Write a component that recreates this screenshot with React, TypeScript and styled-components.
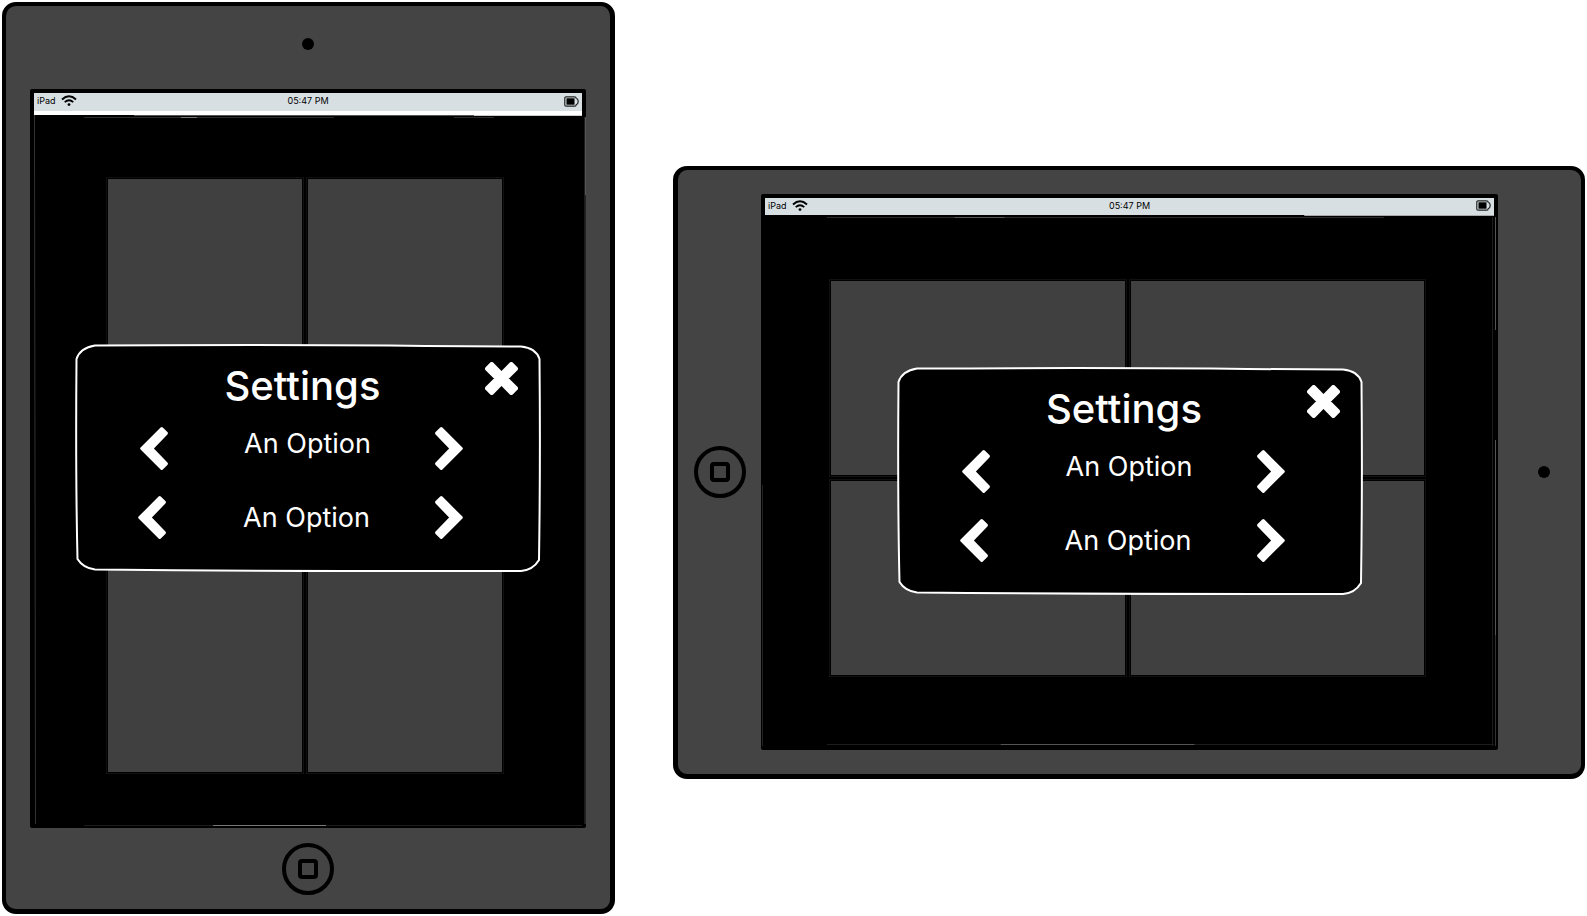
import React from "react";
import styled, { createGlobalStyle } from "styled-components";

type Orientation = "portrait" | "landscape";

const GlobalStyle = createGlobalStyle`
  *, *::before, *::after { box-sizing: border-box; }
  body {
    margin: 0;
    background: #fff;
    font-family: Inter, "Liberation Sans", sans-serif;
  }
  button { padding: 0; border: 0; background: none; color: inherit; cursor: pointer; }
  svg { display: block; }
`;

const Page = styled.main`
  display: grid;
  grid-template-columns: minmax(0, 613fr) minmax(0, 912fr);
  align-items: start;
  gap: 58px;
  padding: 2px;
`;

const Device = styled.section<{ $orientation: Orientation }>`
  display: flex;
  background: #444;
  border: solid #000;
  border-radius: 14px;
  ${({ $orientation }) =>
    $orientation === "portrait"
      ? `
        flex-direction: column;
        aspect-ratio: 613 / 912;
        padding: 0 24px;
        border-width: 4px 5px 5px 4px;
      `
      : `
        flex-direction: row-reverse;
        aspect-ratio: 912 / 613;
        margin-top: 164px;
        padding: 24px 0;
        border-width: 4px 4px 5px 5px;
      `}
`;

const Bezel = styled.div<{ $narrow?: boolean }>`
  flex: 0 0 ${({ $narrow }) => ($narrow ? "81px" : "83px")};
  display: flex;
  align-items: center;
  justify-content: center;
`;

const Camera = styled.span<{ $orientation: Orientation }>`
  width: 12px;
  height: 12px;
  border-radius: 50%;
  background: #000;
  margin: ${({ $orientation }) => ($orientation === "portrait" ? "0 0 8px" : "0 0 0 8px")};
`;

const HomeButton = styled.button`
  display: grid;
  place-items: center;
  width: 52px;
  height: 52px;
  && { border: 4px solid #000; }
  border-radius: 50%;

  &::before {
    content: "";
    width: 20px;
    height: 20px;
    border: 4px solid #000;
    border-radius: 4px;
  }
`;

const Screen = styled.div`
  flex: 1;
  min-width: 0;
  min-height: 0;
  display: flex;
  flex-direction: column;
  border: 4px solid #000;
  border-radius: 2px;
  background: #000;
`;

const StatusBar = styled.header<{ $orientation: Orientation }>`
  display: grid;
  grid-template-columns: 1fr auto 1fr;
  align-items: center;
  height: ${({ $orientation }) => ($orientation === "portrait" ? "22px" : "17px")};
  border-bottom: ${({ $orientation }) => ($orientation === "portrait" ? "4px solid #fff" : "0")};
  padding: 0 3px 2px;
  background: #d7dfe2;
  color: #000;
  font-size: 9px;
  line-height: 12px;
`;

const Carrier = styled.span`
  display: flex;
  align-items: center;
  gap: 5px;
`;

const BatterySlot = styled.span`
  justify-self: end;
`;

const Content = styled.div<{ $orientation: Orientation }>`
  position: relative;
  flex: 1;
  display: flex;
  padding: ${({ $orientation }) =>
    $orientation === "portrait" ? "64px 80px 52px 74px" : "66px 70px 71px 66px"};
`;

const Tiles = styled.div`
  flex: 1;
  display: grid;
  grid-template-columns: 1fr 1fr;
  grid-template-rows: 1fr 1fr;
  gap: 6px;
`;

const Tile = styled.div`
  background: #404040;
  outline: 1px solid #101010;
  outline-offset: 1px;
`;

const SketchLines = styled.svg`
  position: absolute;
  inset: 0;
  width: 100%;
  height: 100%;
  overflow: visible;
  pointer-events: none;
`;

const Dialog = styled.section<{ $orientation: Orientation }>`
  position: absolute;
  top: ${({ $orientation }) => ($orientation === "portrait" ? "229px" : "152px")};
  left: 50%;
  transform: translateX(-50%);
  width: 466px;
  height: 228px;
  padding: 18px 78px 0 63px;
  color: #fff;
`;

const DialogOutline = styled.svg`
  position: absolute;
  inset: 0;
`;

const DialogBody = styled.div`
  position: relative;
  display: flex;
  flex-direction: column;
`;

const Title = styled.h2`
  margin: 0 0 17px;
  padding-left: 4px;
  font-size: 40px;
  line-height: 48px;
  font-weight: 500;
  text-align: center;
`;

const OptionList = styled.div`
  display: flex;
  flex-direction: column;
  gap: 26px;
`;

const OptionRow = styled.div<{ $raised?: boolean }>`
  display: grid;
  grid-template-columns: 28px 1fr 28px;
  align-items: ${({ $raised }) => ($raised ? "start" : "center")};
  padding-left: ${({ $raised }) => ($raised ? "2px" : "0")};
  height: 43px;
`;

const OptionLabel = styled.span`
  padding-left: 12px;
  font-size: 27px;
  line-height: 34px;
  text-align: center;
  white-space: nowrap;
`;

const CloseButton = styled.button`
  position: absolute;
  top: 18px;
  right: 23px;
`;

const WifiIcon = () => (
  <svg width="16" height="12" viewBox="0 0 16 12" fill="none" stroke="#000" aria-hidden="true">
    <path d="M1 4.4Q8-1.8 15 4.4" strokeWidth="2" />
    <path d="M3.7 7.1Q8 3.4 12.3 7.1" strokeWidth="1.8" />
    <circle cx="8" cy="9.6" r="1.4" fill="#000" stroke="none" />
  </svg>
);

const BatteryIcon = () => (
  <svg width="15" height="11" viewBox="0 0 15 11" aria-hidden="true">
    <path
      d="M2 .8H10.5Q12 .8 12.2 2.2Q14.2 2.8 14.2 5.5Q14.2 8.2 12.2 8.8Q12 10.2 10.5 10.2H2Q.8 10.2 .8 9V2Q.8.8 2 .8Z"
      fill="none"
      stroke="#222"
      strokeWidth="1.2"
    />
    <rect x="2.5" y="2.3" width="8" height="6.4" fill="#000" />
  </svg>
);

const Chevron = ({ right = false }: { right?: boolean }) => (
  <svg width="28" height="43" viewBox="0 0 28 43" fill="#fff" aria-hidden="true">
    <path
      transform={right ? "matrix(-1 0 0 1 28 0)" : undefined}
      d="M20.6.6Q21.7-.4 22.8.6L27.4 5.1Q28.5 6.3 27.4 7.5L13.9 21.5L27.4 35.5Q28.5 36.7 27.4 37.9L22.8 42.4Q21.7 43.4 20.6 42.4L.6 22.4Q-.3 21.5.6 20.6Z"
    />
  </svg>
);

const CrossIcon = () => (
  <svg width="33" height="33" viewBox="0 0 32 32" aria-hidden="true">
    <path
      d="M6.5 2L16 11.5L25.5 2L30 6.5L20.5 16L30 25.5L25.5 30L16 20.5L6.5 30L2 25.5L11.5 16L2 6.5Z"
      fill="#fff"
      stroke="#fff"
      strokeWidth="4"
      strokeLinejoin="round"
    />
  </svg>
);

const PortraitSketch = () => (
  <SketchLines viewBox="0 0 548 709" preserveAspectRatio="none" fill="none" aria-hidden="true">
    <path d="M.5 0L1.5 709" stroke="#333" />
    <path d="M50 2.5H300M420 2.5H460" stroke="#2a2a2a" />
    <path d="M147 2.5H163" stroke="#777" />
    <path d="M100 .5H548" stroke="#555" />
    <path d="M440 .5H548" stroke="#ccc" />
    <path d="M550.5 2V709" stroke="#1c1c1c" />
    <path d="M551.5 2V80" stroke="#555" />
    <path d="M551.5 80V709" stroke="#222" />
    <path d="M50 710.5H548" stroke="#1c1c1c" />
    <path d="M179 710.5H292" stroke="#777" />
  </SketchLines>
);

const LandscapeSketch = () => (
  <SketchLines viewBox="0 0 730 531" preserveAspectRatio="none" fill="none" aria-hidden="true">
    <path d="M62 2.5H620" stroke="#2a2a2a" />
    <path d="M190 2.5H240" stroke="#555" />
    <path d="M540 .5H730" stroke="#aaa" />
    <path d="M-2.5 270V531" stroke="#222" />
    <path d="M728.5 2V531" stroke="#1c1c1c" />
    <path d="M731.5 2V115M731.5 225V420" stroke="#555" />
    <path d="M731.5 420V531" stroke="#333" />
    <path d="M62 529.5H730" stroke="#1c1c1c" />
    <path d="M236 529.5H430" stroke="#555" />
  </SketchLines>
);

const SettingsDialog = ({ orientation }: { orientation: Orientation }) => (
  <Dialog
    $orientation={orientation}
    role="dialog"
    aria-labelledby={`settings-${orientation}`}
  >
    <DialogOutline width="466" height="228" viewBox="0 0 466 228" aria-hidden="true">
      <path
        d="M20 1.5Q240 .5 350 2L446 2.5Q461 4 464.5 15Q465.5 120 464 216Q458 226 446 227Q230 227.5 20 225.5Q8 224 2.5 215Q.5 130 1.5 15Q5 4 20 1.5Z"
        fill="#000"
        stroke="#fff"
        strokeWidth="2"
      />
    </DialogOutline>
    <DialogBody>
      <Title id={`settings-${orientation}`}>Settings</Title>
      <OptionList>
        {["first", "second"].map((name, index) => (
          <OptionRow key={name} $raised={index === 0}>
            <button type="button" aria-label={`Previous value, ${name} option`}>
              <Chevron />
            </button>
            <OptionLabel>An Option</OptionLabel>
            <button type="button" aria-label={`Next value, ${name} option`}>
              <Chevron right />
            </button>
          </OptionRow>
        ))}
      </OptionList>
    </DialogBody>
    <CloseButton type="button" aria-label="Close settings">
      <CrossIcon />
    </CloseButton>
  </Dialog>
);

const Tablet = ({ orientation }: { orientation: Orientation }) => (
  <Device $orientation={orientation}>
    <Bezel>
      <Camera $orientation={orientation} />
    </Bezel>
    <Screen>
      <StatusBar $orientation={orientation}>
        <Carrier>
          iPad
          <WifiIcon />
        </Carrier>
        <time>05:47 PM</time>
        <BatterySlot>
          <BatteryIcon />
        </BatterySlot>
      </StatusBar>
      <Content $orientation={orientation}>
        <Tiles>
          <Tile />
          <Tile />
          <Tile />
          <Tile />
        </Tiles>
        {orientation === "portrait" ? <PortraitSketch /> : <LandscapeSketch />}
        <SettingsDialog orientation={orientation} />
      </Content>
    </Screen>
    <Bezel $narrow={orientation === "portrait"}>
      <HomeButton type="button" aria-label="Home" />
    </Bezel>
  </Device>
);

export default function App() {
  return (
    <>
      <GlobalStyle />
      <Page>
        <Tablet orientation="portrait" />
        <Tablet orientation="landscape" />
      </Page>
    </>
  );
}
